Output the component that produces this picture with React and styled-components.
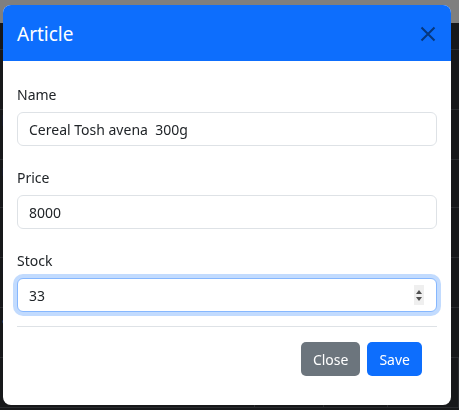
import styled, { createGlobalStyle } from "styled-components";

const GlobalStyle = createGlobalStyle`
  html, body {
    margin: 0;
    padding: 0;
    background: #17181a;
    font-family: "Noto Sans", "Open Sans", sans-serif;
  }
  * { box-sizing: border-box; }
`;

// page behind the modal (already dimmed by the backdrop)
const Page = styled.div`
  width: 459px;
  height: 410px;
  overflow: hidden;
  background: #17181a;
`;

const NavBar = styled.div`
  height: 23px;
  background: #7f7f7f;
`;

const TableRow = styled.div`
  height: ${(props) => props.h}px;
  border-bottom: 1px solid #2a2c2f;
  display: grid;
  grid-template-columns: 253px 69px 64px 1fr;
  color: #6f7175;
  font-size: 15px;
  padding-left: 2px;

  & > span {
    border-right: 1px solid ${(props) => (props.cols ? "#2a2c2f" : "transparent")};
  }
`;

const Backdrop = styled.div`
  position: fixed;
  inset: 0;
  padding: 5px 0 0 3px;
`;

const Dialog = styled.div`
  width: 448px;
  height: 400px;
  background: #fff;
  border-radius: 8px;
  overflow: hidden;
  display: flex;
  flex-direction: column;
`;

const Header = styled.div`
  height: 56px;
  background: #0d6efd;
  display: flex;
  align-items: center;
  justify-content: space-between;
  padding: 0 14px;
  flex-shrink: 0;
`;

const Title = styled.h5`
  margin: 0;
  font-size: 19px;
  font-weight: 400;
  color: #fff;
  line-height: 1.2;
  padding-top: 2px;
`;

const CloseX = styled.button`
  border: none;
  background: none;
  padding: 0;
  width: 22px;
  height: 22px;
  display: flex;
  align-items: center;
  justify-content: center;
  margin-right: -2px;
  margin-top: 2px;
  cursor: pointer;
`;

const Body = styled.div`
  padding: 23px 14px 0;
  display: flex;
  flex-direction: column;
  gap: 21px;
`;

const Field = styled.div`
  display: flex;
  flex-direction: column;
`;

const Label = styled.label`
  font-size: 14px;
  line-height: 22px;
  color: #212529;
  margin-bottom: 6px;
`;

const InputWrap = styled.div`
  position: relative;
`;

const Input = styled.input`
  width: 100%;
  height: 34px;
  padding: 0 11px;
  font-family: inherit;
  font-size: 14px;
  color: #212529;
  background: #fff;
  border: 1px solid ${(props) => (props.$focus ? "#86b7fe" : "#dee2e6")};
  border-radius: 6px;
  outline: none;
  box-shadow: ${(props) =>
    props.$focus ? "0 0 0 4px rgba(13, 110, 253, 0.25)" : "none"};
`;

const Spinner = styled.div`
  position: absolute;
  right: 13px;
  top: 7px;
  width: 10px;
  height: 20px;
  background: #efefef;
  display: flex;
  flex-direction: column;
  align-items: center;
  justify-content: center;
  gap: 3px;
`;

const Divider = styled.hr`
  margin: 14px 14px 0;
  border: none;
  border-top: 1px solid #dee2e6;
  height: 0;
`;

const Footer = styled.div`
  display: flex;
  justify-content: flex-end;
  gap: 7px;
  padding: 15px 29px 0 14px;
`;

const Button = styled.button`
  height: 34px;
  padding: 0 ${(props) => (props.variant === "secondary" ? 12 : 12)}px;
  border: none;
  border-radius: 5px;
  font-family: inherit;
  font-size: 14px;
  color: #fff;
  background: ${(props) => (props.variant === "secondary" ? "#6c757d" : "#0d6efd")};
`;

const rows = [
  { h: 27, text: "" },
  { h: 60, text: "" },
  { h: 50, text: "l" },
  { h: 48, text: "n" },
  { h: 50, text: "" },
  { h: 50, text: "F" },
  { h: 50, text: "a" },
  { h: 50, text: "", cols: true },
];

const App = () => {
  return (
    <>
      <GlobalStyle />
      <Page>
        <NavBar />
        {rows.map((r, i) => (
          <TableRow key={i} h={r.h} cols={r.cols}>
            <span>{r.text}</span>
            <span />
            <span />
            <span />
          </TableRow>
        ))}
      </Page>
      <Backdrop>
        <Dialog>
          <Header>
            <Title>Article</Title>
            <CloseX aria-label="Close">
              <svg width="16" height="16" viewBox="0 0 16 16">
                <path
                  d="M1.5 1.5 L14.5 14.5 M14.5 1.5 L1.5 14.5"
                  stroke="#06377e"
                  strokeWidth="2"
                  fill="none"
                />
              </svg>
            </CloseX>
          </Header>
          <Body>
            <Field>
              <Label>Name</Label>
              <Input readOnly value="Cereal Tosh avena  300g" />
            </Field>
            <Field>
              <Label>Price</Label>
              <Input readOnly value="8000" />
            </Field>
            <Field>
              <Label>Stock</Label>
              <InputWrap>
                <Input readOnly value="33" $focus />
                <Spinner>
                  <svg width="6" height="4" viewBox="0 0 6 4">
                    <path d="M0 4 L3 0 L6 4 Z" fill="#505050" />
                  </svg>
                  <svg width="6" height="4" viewBox="0 0 6 4">
                    <path d="M0 0 L3 4 L6 0 Z" fill="#505050" />
                  </svg>
                </Spinner>
              </InputWrap>
            </Field>
          </Body>
          <Divider />
          <Footer>
            <Button variant="secondary">Close</Button>
            <Button>Save</Button>
          </Footer>
        </Dialog>
      </Backdrop>
    </>
  );
};

export default App;
